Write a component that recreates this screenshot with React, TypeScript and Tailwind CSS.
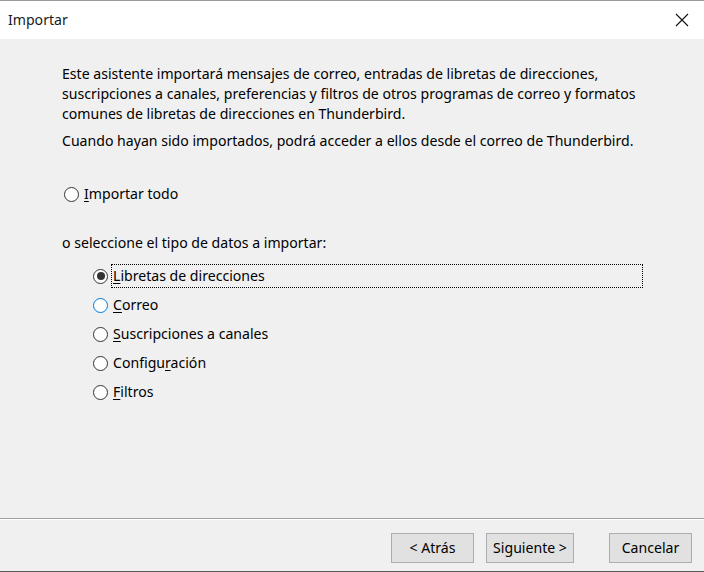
import React from "react";

function Radio({ checked, hover }: { checked?: boolean; hover?: boolean }) {
  return (
    <span
      className={
        "flex h-[15px] w-[15px] shrink-0 items-center justify-center rounded-full border bg-white " +
        (hover ? "border-[#0078d7]" : "border-[#333333]")
      }
    >
      {checked && <span className="h-[8px] w-[8px] rounded-full bg-[#333333]" />}
    </span>
  );
}

function Label({ text, u }: { text: string; u: number }) {
  return (
    <span>
      {text.slice(0, u)}
      <span className="underline underline-offset-2">{text.slice(u, u + 1)}</span>
      {text.slice(u + 1)}
    </span>
  );
}

export default function App() {
  const items = [
    { text: "Libretas de direcciones", u: 0, checked: true },
    { text: "Correo", u: 0, hover: true },
    { text: "Suscripciones a canales", u: 0 },
    { text: "Configuración", u: 7 },
    { text: "Filtros", u: 0 },
  ];
  return (
    <div
      className="flex h-[572px] w-[704px] flex-col overflow-hidden bg-[#f0f0f0] text-[14.1px] text-black"
      style={{ fontFamily: '"Noto Sans", sans-serif' }}
    >
      <div className="flex h-[39px] shrink-0 items-center justify-between border-t border-[#9a9a9a] bg-white pl-[8px] pr-[14px]">
        <span className="text-[14.1px] text-[#1a1a1a]">Importar</span>
        <svg width="14" height="14" viewBox="0 0 14 14" className="mr-[1px]">
          <path d="M1 1 L13 13 M13 1 L1 13" stroke="#111" strokeWidth="1.1" />
        </svg>
      </div>
      <div className="flex flex-1 flex-col pl-[62px] pt-[25px]">
        <p className="whitespace-nowrap leading-[20px]">
          Este asistente importará mensajes de correo, entradas de libretas de direcciones,
          <br />
          suscripciones a canales, preferencias y filtros de otros programas de correo y formatos
          <br />
          comunes de libretas de direcciones en Thunderbird.
        </p>
        <p className="mt-[7px] whitespace-nowrap leading-[20px]">
          Cuando hayan sido importados, podrá acceder a ellos desde el correo de Thunderbird.
        </p>
        <div className="mt-[33px] flex items-center gap-[5px] pl-[2px] leading-[20px]">
          <Radio />
          <Label text="Importar todo" u={0} />
        </div>
        <p className="mt-[29px] leading-[20px]">o seleccione el tipo de datos a importar:</p>
        <div className="mt-[11px] flex flex-col gap-[5px] pl-[31px]">
          {items.map((it, i) => (
            <div key={i} className="flex items-center gap-[3px] leading-[20px]">
              <Radio checked={it.checked} hover={it.hover} />
              <span
                className={
                  "px-[1px] " +
                  (i === 0
                    ? "w-[532px] border border-dotted border-black py-[1px]"
                    : "border border-transparent py-[1px]")
                }
              >
                <Label text={it.text} u={it.u} />
              </span>
            </div>
          ))}
        </div>
      </div>
      <div className="h-[2px] shrink-0 border-t border-[#a0a0a0] bg-white" />
      <div className="flex h-[52px] shrink-0 items-start border-b border-[#5a5a5a] pl-[391px] pt-[13px]">
        <button className="h-[30px] w-[83px] border border-[#adadad] bg-[#e1e1e1] text-[14.1px]">
          &lt; Atrás
        </button>
        <button className="ml-[12px] h-[30px] w-[88px] border border-[#adadad] bg-[#e1e1e1] text-[14.1px]">
          Siguiente &gt;
        </button>
        <button className="ml-[35px] h-[30px] w-[83px] border border-[#adadad] bg-[#e1e1e1] text-[14.1px]">
          Cancelar
        </button>
      </div>
    </div>
  );
}
